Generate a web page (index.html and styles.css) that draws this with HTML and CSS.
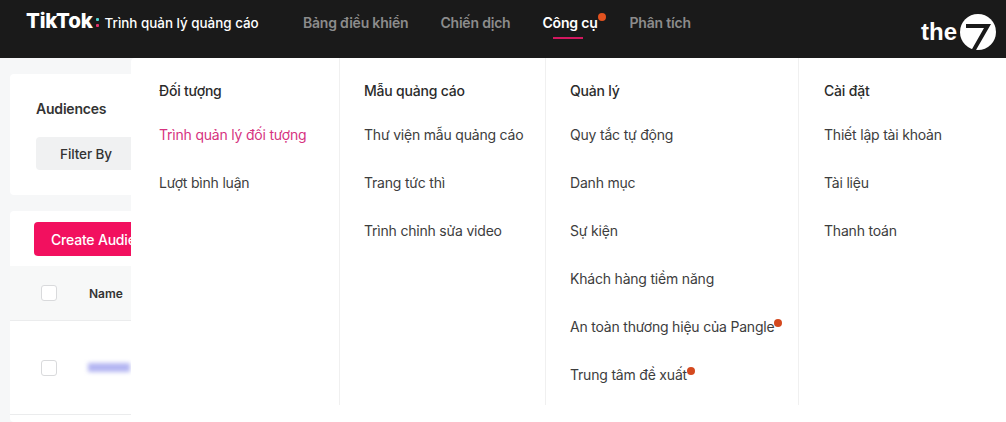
FILE: index.html
```html
<!DOCTYPE html>
<html lang="vi">
<head>
<meta charset="utf-8">
<title>TikTok Trình quản lý quảng cáo</title>
<link rel="stylesheet" href="styles.css">
</head>
<body>
<header class="topbar">
  <div class="brand">
    <span class="brand-name">TikTok</span>
    <span class="brand-dots"><i class="dot-cyan"></i><i class="dot-pink"></i></span>
    <span class="brand-sub">Trình quản lý quảng cáo</span>
  </div>
  <nav class="nav">
    <a class="nav-item">Bảng điều khiển</a>
    <a class="nav-item">Chiến dịch</a>
    <a class="nav-item nav-active">Công cụ<span class="nav-badge"></span></a>
    <a class="nav-item">Phân tích</a>
  </nav>
  <div class="the7">
    <span class="the7-word">the</span>
    <svg class="the7-mark" width="36" height="36" viewBox="0 0 36 36"><circle cx="18" cy="18" r="18" fill="#fff"/><path fill="#1a1a1a" d="M6 10H31L16 36H11.500L24 14H6z"/></svg>
  </div>
</header>

<main class="content">
  <section class="card card-filter">
    <h2 class="card-title">Audiences</h2>
    <button class="filter-btn">Filter By</button>
  </section>
  <section class="card card-table">
    <div class="toolbar"><button class="create-btn">Create Audience</button></div>
    <div class="row row-head"><span class="check"></span><span class="col-name">Name</span></div>
    <div class="row row-body"><span class="check"></span><span class="blurred"></span></div>
  </section>
</main>

<div class="menu">
  <div class="menu-col col-a">
    <div class="menu-head">Đối tượng</div>
    <a class="menu-link menu-current">Trình quản lý đối tượng</a>
    <a class="menu-link">Lượt bình luận</a>
  </div>
  <div class="menu-col col-b">
    <div class="menu-head">Mẫu quảng cáo</div>
    <a class="menu-link">Thư viện mẫu quảng cáo</a>
    <a class="menu-link">Trang tức thì</a>
    <a class="menu-link">Trình chỉnh sửa video</a>
  </div>
  <div class="menu-col col-c">
    <div class="menu-head">Quản lý</div>
    <a class="menu-link">Quy tắc tự động</a>
    <a class="menu-link">Danh mục</a>
    <a class="menu-link">Sự kiện</a>
    <a class="menu-link">Khách hàng tiềm năng</a>
    <a class="menu-link">An toàn thương hiệu của Pangle<span class="menu-badge"></span></a>
    <a class="menu-link">Trung tâm đề xuất<span class="menu-badge"></span></a>
  </div>
  <div class="menu-col col-d">
    <div class="menu-head">Cài đặt</div>
    <a class="menu-link">Thiết lập tài khoản</a>
    <a class="menu-link">Tài liệu</a>
    <a class="menu-link">Thanh toán</a>
  </div>
</div>
</body>
</html>
```
FILE: styles.css
```css
* { box-sizing: border-box; }
html, body { margin: 0; height: 422px; overflow: hidden; }
body {
  position: relative;
  background: #f6f7f8;
  font-family: Inter, "Liberation Sans", sans-serif;
  color: #333;
}

.topbar {
  height: 58px;
  background: #1a1a1a;
  display: flex;
  align-items: flex-start;
  position: relative;
}
.brand {
  display: flex;
  align-items: center;
  height: 42px;
  padding-left: 26px;
  width: 303px;
  color: #fff;
}
.brand-name { font-weight: 800; font-size: 20.5px; letter-spacing: -0.2px; line-height: 42px; }
.brand-dots { display: flex; flex-direction: column; gap: 3px; margin: 3px 6px 0 3px; }
.brand-dots i { display: block; width: 3px; height: 3px; border-radius: 1px; }
.dot-cyan { background: #4fd6d6; }
.dot-pink { background: #e8316a; }
.brand-sub { font-size: 13.4px; font-weight: 500; white-space: nowrap; margin-top: 3px; }

.nav { display: flex; align-items: flex-start; gap: 32px; padding-top: 14px; }
.nav-item {
  position: relative;
  font-size: 14px;
  font-weight: 600;
  line-height: 18px;
  letter-spacing: -0.2px;
  color: #8c8c8c;
  white-space: nowrap;
}
.nav-active { color: #fff; }
.nav-active::after {
  content: "";
  position: absolute;
  left: 11px;
  bottom: -7px;
  width: 30px;
  height: 2px;
  background: #d3185f;
}
.nav-badge {
  position: absolute;
  right: -8px;
  top: -1px;
  width: 8px;
  height: 8px;
  border-radius: 50%;
  background: #e2521f;
}

.the7 {
  position: absolute;
  right: 10px;
  top: 14px;
  display: flex;
  align-items: center;
  gap: 3px;
}
.the7-word { color: #fff; font-family: "Liberation Sans", sans-serif; font-weight: 700; font-size: 24px; line-height: 36px; }

.content { padding: 16px 0 0 10px; display: flex; flex-direction: column; gap: 16px; }
.card { background: #fff; width: 400px; border-radius: 4px; }
.card-filter { height: 121px; padding: 26px 26px 0; }
.card-title { margin: 0 0 20px; font-size: 14px; line-height: 17px; font-weight: 600; letter-spacing: -0.2px; color: #333; }
.filter-btn {
  display: block;
  width: 100px;
  height: 33px;
  border: 0;
  border-radius: 4px;
  background: #f0f1f2;
  font: 500 13.5px Inter, sans-serif;
  letter-spacing: -0.1px;
  color: #333;
}
.card-table { height: 211px; }
.toolbar { height: 55px; padding: 11px 24px 0; }
.create-btn {
  width: 140px;
  height: 34px;
  border: 0;
  border-radius: 4px;
  background: #f2105f;
  color: #fff;
  font: 500 14px Inter, sans-serif;
  letter-spacing: -0.2px;
  text-align: left;
  padding-left: 17px;
  white-space: nowrap;
}
.row { display: flex; align-items: center; padding-left: 31px; gap: 32px; border-bottom: 1px solid #ebeced; }
.row-head { height: 55px; background: #f7f8f8; }
.row-body { height: 94px; }
.check { width: 16px; height: 16px; border: 1px solid #d9dadc; border-radius: 3px; background: #fff; }
.col-name { font-size: 12px; font-weight: 600; color: #333; }
.blurred { width: 42px; height: 9px; background: #b4b6f2; filter: blur(2px); margin-left: -1px; }

.menu {
  position: absolute;
  left: 131px;
  top: 58px;
  width: 875px;
  height: 364px;
  background: #fff;
  display: flex;
  align-items: flex-start;
  border-top-left-radius: 4px;
}
.menu-col { height: 347px; padding-top: 24px; display: flex; flex-direction: column; border-right: 1px solid #f0f0f0; }
.col-a { width: 209px; padding-left: 28px; }
.col-b { width: 206px; padding-left: 24px; }
.col-c { width: 253px; padding-left: 24px; }
.col-d { width: 207px; padding-left: 25px; border-right: 0; }
.menu-head { flex: none; font-size: 14px; font-weight: 500; letter-spacing: -0.2px; line-height: 18px; height: 40px; color: #2b2b2b; white-space: nowrap; }
.menu-link {
  flex: none;
  position: relative;
  font-size: 14px;
  font-weight: 400;
  letter-spacing: -0.2px;
  line-height: 18px;
  margin: 4px 0 26px;
  color: #3d3d3d;
  white-space: nowrap;
  align-self: flex-start;
}
.menu-link:last-child { margin-bottom: 0; }
.menu-current { color: #d6337f; }
.menu-badge {
  position: absolute;
  right: -8px;
  top: 1px;
  width: 8px;
  height: 8px;
  border-radius: 50%;
  background: #d4491f;
}
```
